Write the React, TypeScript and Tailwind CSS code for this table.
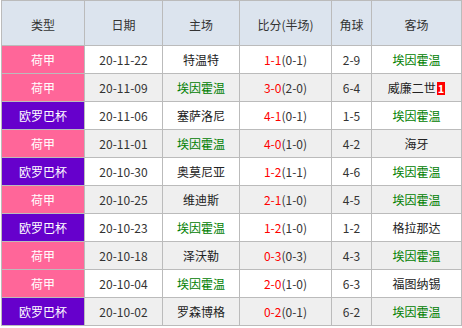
import React from "react";

type Row = {
  type: string;
  date: string;
  home: string;
  score: string;
  half: string;
  corner: string;
  away: string;
  badge?: string;
};

const rows: Row[] = [
  { type: "荷甲", date: "20-11-22", home: "特温特", score: "1-1", half: "(0-1)", corner: "2-9", away: "埃因霍温" },
  { type: "荷甲", date: "20-11-09", home: "埃因霍温", score: "3-0", half: "(2-0)", corner: "6-4", away: "威廉二世", badge: "1" },
  { type: "欧罗巴杯", date: "20-11-06", home: "塞萨洛尼", score: "4-1", half: "(0-1)", corner: "1-5", away: "埃因霍温" },
  { type: "荷甲", date: "20-11-01", home: "埃因霍温", score: "4-0", half: "(1-0)", corner: "4-2", away: "海牙" },
  { type: "欧罗巴杯", date: "20-10-30", home: "奥莫尼亚", score: "1-2", half: "(1-1)", corner: "4-6", away: "埃因霍温" },
  { type: "荷甲", date: "20-10-25", home: "维迪斯", score: "2-1", half: "(1-0)", corner: "4-5", away: "埃因霍温" },
  { type: "欧罗巴杯", date: "20-10-23", home: "埃因霍温", score: "1-2", half: "(1-0)", corner: "1-2", away: "格拉那达" },
  { type: "荷甲", date: "20-10-18", home: "泽沃勒", score: "0-3", half: "(0-3)", corner: "4-3", away: "埃因霍温" },
  { type: "荷甲", date: "20-10-04", home: "埃因霍温", score: "2-0", half: "(1-0)", corner: "6-3", away: "福图纳锡" },
  { type: "欧罗巴杯", date: "20-10-02", home: "罗森博格", score: "0-2", half: "(0-1)", corner: "6-2", away: "埃因霍温" },
];

const TEAM = "埃因霍温";

function Team({ name, badge }: { name: string; badge?: string }) {
  return (
    <span className={name === TEAM ? "text-[#008000]" : "text-[#222222]"}>
      {name}
      {badge && (
        <span className="ml-[1px] inline-block bg-[#ff0000] px-[1px] text-[11px] font-bold leading-[13px] text-white">
          {badge}
        </span>
      )}
    </span>
  );
}

const cell = "flex items-center justify-center border-r border-b border-[#bbbbbb]";
const head = `${cell} pt-[4px]`;

export default function App() {
  return (
    <div className="pl-[1px]">
      <div
        className="w-[461px] border-l border-t border-[#bbbbbb] text-[12px] text-[#333333]"
        style={{ fontFamily: '"Noto Sans CJK SC", "Noto Sans", sans-serif' }}
      >
        <div className="flex h-[45px] bg-[#dce4ee]">
          <div className={`${head} w-[83px]`}>类型</div>
          <div className={`${head} w-[78px]`}>日期</div>
          <div className={`${head} w-[77px]`}>主场</div>
          <div className={`${head} w-[92px]`}>比分(半场)</div>
          <div className={`${head} w-[40px]`}>角球</div>
          <div className={`${head} w-[90px]`}>客场</div>
        </div>
        {rows.map((r, i) => {
          const bg = i % 2 === 0 ? "bg-white" : "bg-[#efefef]";
          const typeBg = r.type === "荷甲" ? "bg-[#ff6699]" : "bg-[#6600cc]";
          return (
            <div key={i} className={`flex h-[28px] ${bg}`}>
              <div className={`${cell} w-[83px] ${typeBg} text-white`}>{r.type}</div>
              <div className={`${cell} w-[78px]`}>{r.date}</div>
              <div className={`${cell} w-[77px]`}>
                <Team name={r.home} />
              </div>
              <div className={`${cell} w-[92px]`}>
                <span className="text-[#ff0000]">{r.score}</span>
                <span>{r.half}</span>
              </div>
              <div className={`${cell} w-[40px]`}>{r.corner}</div>
              <div className={`${cell} w-[90px]`}>
                <Team name={r.away} badge={r.badge} />
              </div>
            </div>
          );
        })}
      </div>
    </div>
  );
}
